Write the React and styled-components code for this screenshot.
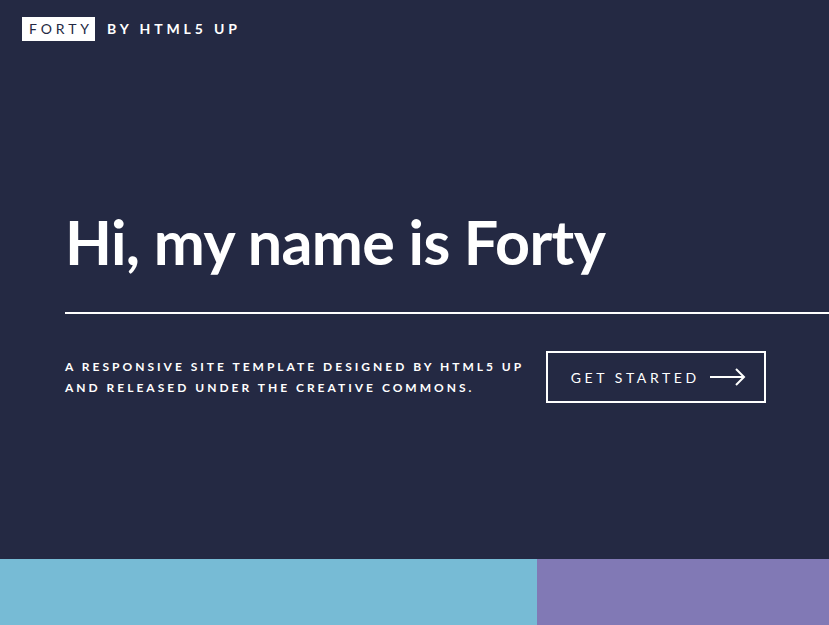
import React from 'react';
import styled, { createGlobalStyle } from 'styled-components';

const GlobalStyle = createGlobalStyle`
  html, body {
    margin: 0;
    padding: 0;
    background: #242943;
  }
  body {
    font-family: Lato, "Open Sans", sans-serif;
    color: #ffffff;
    overflow: hidden;
  }
`;

const Page = styled.div`
  width: 829px;
  height: 625px;
  display: flex;
  flex-direction: column;
  background: #242943;
  overflow: hidden;
`;

/* Header */

const Header = styled.header`
  height: 58px;
  padding-left: 22px;
  display: flex;
  align-items: center;
`;

const Logo = styled.div`
  display: flex;
  align-items: center;
  gap: 12px;
  font-size: 14px;
  font-weight: 700;
  letter-spacing: 3.9px;
  text-transform: uppercase;
`;

const LogoBox = styled.span`
  background: #ffffff;
  color: #242943;
  font-weight: 400;
  height: 24px;
  line-height: 24px;
  padding: 0 2px 0 7px;
  margin-top: -1px;
`;

const LogoBy = styled.span`
  color: #ffffff;
  margin-top: -1px;
`;

/* Banner */

const Banner = styled.section`
  flex: 1;
  padding: 153px 0 0 65px;
  display: flex;
  flex-direction: column;
`;

const Title = styled.h1`
  margin: 0;
  font-size: 61px;
  font-weight: 700;
  line-height: 1;
  letter-spacing: -0.6px;
  color: #ffffff;
`;

const Rule = styled.div`
  height: 2px;
  background: #ffffff;
  margin-top: 40px;
`;

const Content = styled.div`
  display: flex;
  align-items: center;
  margin-top: 37px;
  gap: 22px;
`;

const Lead = styled.p`
  margin: 0;
  font-size: 12px;
  font-weight: 700;
  line-height: 21px;
  letter-spacing: 3px;
  text-transform: uppercase;
`;

const Button = styled.a`
  width: 220px;
  height: 52px;
  box-sizing: border-box;
  border: 2px solid #ffffff;
  display: flex;
  align-items: center;
  justify-content: center;
  gap: 10px;
  font-size: 14px;
  font-weight: 400;
  letter-spacing: 3.6px;
  color: #ffffff;
  text-decoration: none;
  text-transform: uppercase;
  padding-left: 4px;
`;

const Arrow = styled.svg`
  width: 36px;
  height: 18px;
  display: block;
`;

/* Tiles */

const Tiles = styled.div`
  height: 66px;
  display: flex;
`;

const Tile = styled.div`
  width: ${p => p.$w}px;
  flex: ${p => (p.$w ? 'none' : 1)};
  background: ${p => p.$color};
`;

export default function App() {
  return (
    <Page>
      <GlobalStyle />
      <Header>
        <Logo>
          <LogoBox>Forty</LogoBox>
          <LogoBy>by HTML5 UP</LogoBy>
        </Logo>
      </Header>
      <Banner>
        <Title>Hi, my name is Forty</Title>
        <Rule />
        <Content>
          <Lead>
            A responsive site template designed by HTML5 UP
            <br />
            and released under the Creative Commons.
          </Lead>
          <Button href="#">
            Get Started
            <Arrow viewBox="0 0 36 18" fill="none" stroke="#ffffff" strokeWidth="2">
              <line x1="0" y1="9" x2="34" y2="9" />
              <polyline points="26,1 34,9 26,17" />
            </Arrow>
          </Button>
        </Content>
      </Banner>
      <Tiles>
        <Tile $w={537} $color="#77bbd5" />
        <Tile $color="#8179b5" />
      </Tiles>
    </Page>
  );
}
